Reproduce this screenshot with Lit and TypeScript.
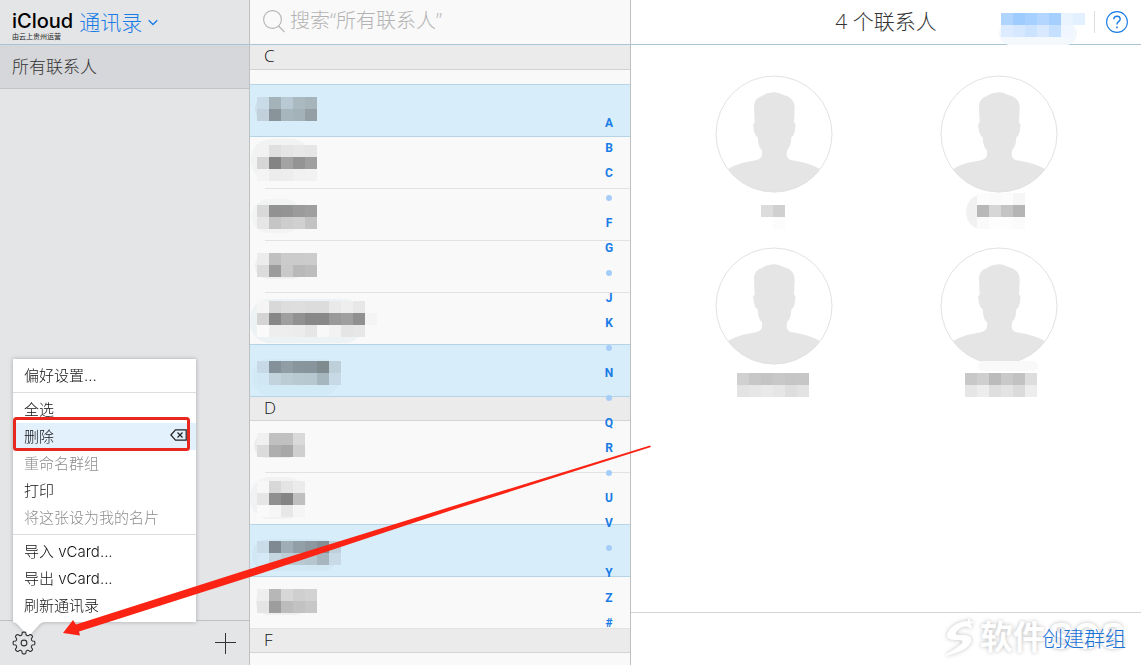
import { LitElement, html, svg, css, nothing } from "lit";
import { customElement, property } from "lit/decorators.js";
import { classMap } from "lit/directives/class-map.js";

const CELL = 12;

interface Mosaic {
  x: number;
  y: number;
  rows: string[];
  /** Soft smudge behind the cells: x, y, width, height, colour. */
  smudge?: [number, number, number, number, string];
}

interface Contact {
  selected?: boolean;
  name: Mosaic;
}

const gearPath = (() => {
  const pts: string[] = [];
  const teeth = 8;
  const at = (r: number, deg: number) => {
    const a = (deg * Math.PI) / 180;
    return `${(12 + r * Math.sin(a)).toFixed(2)} ${(12 - r * Math.cos(a)).toFixed(2)}`;
  };
  for (let i = 0; i < teeth; i++) {
    const c = (i * 360) / teeth;
    pts.push(`${i ? "L" : "M"}${at(8.6, c - 14)}`);
    pts.push(`L${at(10.4, c - 10)} Q${at(10.8, c - 8)} ${at(10.9, c - 5)}`);
    pts.push(`L${at(10.9, c + 5)} Q${at(10.8, c + 8)} ${at(10.4, c + 10)}`);
    pts.push(`L${at(8.6, c + 14)} Q${at(7.6, c + 22.5)} ${at(8.6, c + 31)}`);
  }
  return pts.join(" ") + "Z";
})();

@customElement("pixel-name")
class PixelName extends LitElement {
  @property({ attribute: false }) mosaic!: Mosaic;
  @property({ type: Number }) width = 120;
  @property({ type: Number }) height = 50;

  static styles = css`
    :host {
      display: block;
    }
    svg {
      display: block;
      overflow: visible;
    }
  `;

  render() {
    const { x, y, rows, smudge } = this.mosaic;
    return html`<svg width=${this.width} height=${this.height} shape-rendering="crispEdges" aria-hidden="true">
      ${smudge
        ? svg`<rect x=${smudge[0]} y=${smudge[1]} width=${smudge[2]} height=${smudge[3]} rx=${Math.min(20, smudge[3] / 2)} fill=${smudge[4]} shape-rendering="auto" />`
        : nothing}
      ${rows.map((row, r) =>
        row.split(" ").map((c, i) =>
          c === "-"
            ? nothing
            : svg`<rect x=${x + i * CELL} y=${y + r * CELL} width=${CELL} height=${CELL} fill=${"#" + (c.length === 2 ? c + c + c : c)} />`
        )
      )}
    </svg>`;
  }
}

@customElement("contact-avatar")
class ContactAvatar extends LitElement {
  static styles = css`
    :host {
      display: block;
    }
    svg {
      display: block;
    }
  `;
  render() {
    return html`<svg width="118" height="117" viewBox="45 44 354 351" overflow="visible" aria-hidden="true">
      <path
        fill="#e5e5e5"
        d="M222 96C240 97 245 104 258 106C275 112 285 125 284 145L282 187Q288 188 286 200Q284 226 274 231C273 250 270 262 262 268Q254 294 275 300C310 305 340 314 361 327A174 174 0 0 1 84 327C105 312 135 305 168 300Q190 295 186 270C177 262 174 250 173 231Q163 226 160 200Q158 188 164 187L162 138C163 120 172 112 185 108C197 100 205 97 222 96Z"
      />
      <circle cx="222" cy="221" r="174" fill="none" stroke="#e2e2e2" stroke-width="3" />
    </svg>`;
  }
}

const groupC: Contact[] = [
  { selected: true, name: { x: 7, y: 12, rows: ["c8dbe6 a4b2ba b8c9d3 abb9c1 a6b4bb", "c1d0da 89939a a7b5bd a3b1b8 939ea5"], smudge: [5, 12, 40, 24, "#cfe0ea"] } },
  { name: { x: 7, y: 8, rows: ["f2 df e5 e8 e6", "d6 84 a3 94 9f", "f4 ec ed f1 f2"], smudge: [1, 2, 60, 42, "#f1f3f3"] } },
  { name: { x: 7, y: 16, rows: ["d9 92 94 9b 9f", "e6 c5 cd d0 c3"], smudge: [2, 10, 50, 34, "#f2f3f3"] } },
  { name: { x: 7, y: 12, rows: ["ec c0 cb cb cc", "dc 9b c9 b9 bd"], smudge: [5, 12, 50, 26, "#eeefef"] } },
  { name: { x: 7, y: 8, rows: ["f5 d8 dd de dc dc e9 ee e7", "d4 87 9f 91 88 88 99 9f 90 f4", "fa ee ed ec e6 f8 f2 e5 e7"], smudge: [0, 6, 114, 44, "#edf3f5"] } },
  { selected: true, name: { x: 7, y: 16, rows: ["c6d9e4 84919a 909da5 88959d 87949b 808b90 bdcfd8", "d2e7f4 c2d3dd bbccd5 b8c9d2 b7c8d1 a7b7bf c7d9e4"], smudge: [2, 14, 88, 36, "#d2eaf5"] } },
];

const groupD: Contact[] = [
  { name: { x: 7, y: 12, rows: ["f0 c0 c0 d9", "db ae a8 cf"], smudge: [4, 12, 46, 25, "#ececec"] } },
  { name: { x: 7, y: 8, rows: ["f7 d8 e4 eb", "e6 90 84 bf", "fa f6 e8 f5"], smudge: [0, 4, 56, 42, "#f0f2f3"] } },
  { selected: true, name: { x: 7, y: 16, rows: ["c9dce8 7f8992 9fadb6 939fa7 8c979f 858e93 bed1db", "d5eaf7 c5d6e0 bccdd6 b8c9d2 b5c6cf a7b6be c8dae5"], smudge: [2, 14, 86, 32, "#d1e7f3"] } },
  { name: { x: 7, y: 12, rows: ["ee b7 d7 cf d2", "e5 9d bc c2 c7"], smudge: [6, 12, 52, 26, "#eeefef"] } },
];

const people: Mosaic[] = [
  { x: 48, y: 13, rows: ["dc d0", "- fc"] },
  { x: 39, y: 1, rows: ["fc fa fc f6", "b8 d6 c4 b5", "fa fd fd fb"], smudge: [28, 3, 30, 34, "#f1f1f1"] },
  { x: 24, y: 9, rows: ["d0 c7 c4 c8 c5 c6", "e3 e6 e9 e6 de e3"] },
  { x: 27, y: 9, rows: ["c8 cf bb c9 c2 dd", "e6 ed de e3 db ed"], smudge: [40, -3, 60, 10, "#f9f9f9"] },
];

const account: Mosaic = {
  x: 6,
  y: 13,
  rows: ["afd5ff 9fccff a6d0ff b2d6ff a4cfff eaf4ff e3f0ff", "dcebff d5e8ff cce3ff d8e9ff c5dfff eff6ff"],
  smudge: [4, 22, 78, 23, "#f3f8fc"],
};

const indexKeys = ["A", "B", "C", "•", "F", "G", "•", "J", "K", "•", "N", "•", "Q", "R", "•", "U", "V", "•", "Y", "Z", "#"];

const menu: { label: string; disabled?: boolean; active?: boolean }[][] = [
  [{ label: "偏好设置..." }],
  [
    { label: "全选" },
    { label: "删除", active: true },
    { label: "重命名群组", disabled: true },
    { label: "打印" },
    { label: "将这张设为我的名片", disabled: true },
  ],
  [{ label: "导入 vCard..." }, { label: "导出 vCard..." }, { label: "刷新通讯录" }],
];

@customElement("app-root")
class AppRoot extends LitElement {
  static styles = css`
    :host {
      display: grid;
      grid-template-columns: 250px 381px minmax(0, 1fr);
      grid-template-rows: minmax(0, 1fr);
      position: relative;
      height: 100vh;
      overflow: hidden;
      background: #fff;
      color: #333;
      font-family: "Open Sans", "Noto Sans CJK SC", sans-serif;
      font-weight: 300;
    }
    * {
      box-sizing: border-box;
    }
    button,
    input {
      font: inherit;
      color: inherit;
      border: 0;
      margin: 0;
      padding: 0;
      background: none;
      outline: 0;
      text-align: left;
    }
    a {
      color: inherit;
      text-decoration: none;
    }
    ul {
      list-style: none;
      margin: 0;
      padding: 0;
    }
    .column {
      display: flex;
      flex-direction: column;
      min-width: 0;
    }
    .head {
      flex: none;
      height: 45px;
      border-bottom: 1px solid #a9c4d6;
      display: flex;
      align-items: center;
    }

    .sidebar {
      background: #e4e5e7;
      border-right: 1px solid #bfc0c2;
    }
    .brand {
      padding: 0 12px;
      gap: 6px;
    }
    .logo {
      display: flex;
      flex-direction: column;
      color: #000;
      padding-top: 5px;
    }
    .word {
      font: 500 20px/22px Inter, sans-serif;
    }
    .operator {
      font: 400 7px/8px "Noto Sans CJK SC", sans-serif;
      color: #222;
    }
    .switcher {
      display: flex;
      align-items: center;
      gap: 6px;
      font-size: 21px;
      line-height: 30px;
      color: #1a7ce6;
    }
    .group {
      height: 44px;
      padding: 0 12px;
      background: #d6d7da;
      border-bottom: 1px solid #c3c4c6;
      font-size: 17px;
      line-height: 43px;
    }
    .tools {
      margin-top: auto;
      height: 45px;
      padding: 0 13px 0 12px;
      border-top: 1px solid #bfc0c2;
      display: flex;
      justify-content: space-between;
      align-items: center;
    }
    .tools button,
    .tools svg {
      display: block;
    }
    .gear {
      position: relative;
      z-index: 3;
    }

    .list {
      position: relative;
      background: #f9f9f9;
      border-right: 1px solid #bfbfbf;
    }
    .search {
      padding: 0 12px;
      gap: 4px;
    }
    .search input {
      flex: 1;
      min-width: 0;
      font-size: 20px;
      height: 40px;
      padding-bottom: 4px;
    }
    .search input::placeholder {
      color: #b3b3b3;
      opacity: 1;
    }
    .search svg {
      display: block;
      flex: none;
    }
    .scroll {
      flex: 1;
      min-height: 0;
      overflow: hidden;
    }
    .letter {
      margin: 0;
      height: 24px;
      padding-left: 14px;
      background: #ebebeb;
      border-bottom: 1px solid #d3d3d3;
      color: #111;
      font-size: 17px;
      font-weight: 300;
      line-height: 22px;
    }
    .first {
      height: 25px;
      margin-bottom: 15px;
    }
    .contact {
      height: 52px;
      background: linear-gradient(#e2e2e2, #e2e2e2) right bottom / calc(100% - 15px) 1px no-repeat;
    }
    .contact:last-child {
      background-size: 100% 1px;
    }
    .selected {
      position: relative;
      background: #d8edfa;
      border-bottom: 1px solid #b5d5e7;
      box-shadow: 0 -1px 0 #b5d5e7;
    }
    .index {
      position: absolute;
      top: 111px;
      right: 11px;
      width: 20px;
      font: 700 12px/25px Roboto, sans-serif;
      color: #1a7ce6;
      text-align: center;
    }
    .index a {
      display: flex;
      height: 25px;
      align-items: center;
      justify-content: center;
    }
    .dot {
      width: 6px;
      height: 6px;
      margin-bottom: 2px;
      border-radius: 3px;
      background: #a5cdf8;
    }

    .summary {
      display: grid;
      grid-template-columns: 1fr auto 1fr;
    }
    .title {
      grid-column: 2;
      margin: 0;
      font-size: 21px;
      font-weight: 300;
      line-height: 42px;
      padding-bottom: 2px;
    }
    .account {
      display: flex;
      align-items: center;
      justify-content: flex-end;
      padding-right: 13px;
    }
    .help {
      border-left: 1px solid #ddd;
      padding-left: 11px;
      color: #1a7ce6;
    }
    .help svg {
      display: block;
    }
    .people {
      flex: 1;
      display: grid;
      grid-template-columns: 1fr 1fr;
      align-content: start;
      padding: 30px 30px 0;
    }
    .person {
      display: flex;
      flex-direction: column;
      align-items: center;
    }
    .actions {
      position: relative;
      height: 53px;
      border-top: 1px solid #d5d5d5;
      display: flex;
      justify-content: flex-end;
      align-items: center;
      padding-right: 15px;
    }
    .create {
      position: relative;
      font-size: 21px;
      line-height: 30px;
      padding-bottom: 2px;
      color: #1b73d6;
    }
    .watermark {
      position: absolute;
      right: 16px;
      top: 2px;
      display: flex;
      align-items: center;
      gap: 3px;
      font: 700 33px/44px "Liberation Sans", "Noto Sans CJK SC", sans-serif;
      color: #fff;
      text-shadow: 0 0 4px #bbb;
    }
    .latin {
      font-size: 36px;
      margin-left: 3px;
    }
    .watermark svg {
      filter: drop-shadow(0 0 2px #c0c0c0);
    }

    .menu {
      position: absolute;
      z-index: 2;
      left: 13px;
      bottom: 43px;
      width: 183px;
      padding: 3px 0;
      background: #fff;
      filter: drop-shadow(0 0 2px #a8a8a8);
      color: #111;
      font-family: Inter, "Noto Sans CJK SC", sans-serif;
      font-size: 15px;
    }
    .menu li + li {
      border-top: 1px solid #ddd;
      margin-top: 3px;
      padding-top: 3px;
    }
    .item {
      display: flex;
      align-items: center;
      justify-content: space-between;
      width: 100%;
      height: 27px;
      padding: 0 9px 0 11px;
      line-height: 27px;
    }
    .item svg {
      margin-bottom: 4px;
    }
    .active {
      background: #e3f1fd;
    }
    .item:disabled {
      color: #8c8c8c;
    }
    .pointer {
      position: absolute;
      left: 0;
      top: 100%;
      display: block;
    }
    .markup {
      position: absolute;
      z-index: 4;
      left: 0;
      bottom: 0;
      pointer-events: none;
    }
  `;

  private contact(c: Contact) {
    return html`<li class=${classMap({ contact: true, selected: !!c.selected })}>
      <pixel-name .mosaic=${c.name}></pixel-name>
    </li>`;
  }

  render() {
    return html`
      <aside class="column sidebar">
        <header class="head brand">
          <div class="logo">
            <span class="word">iCloud</span>
            <span class="operator">由云上贵州运营</span>
          </div>
          <button class="switcher">
            通讯录
            <svg width="10" height="7" viewBox="0 0 10 7" fill="none" stroke="currentColor" stroke-width="1.3" aria-hidden="true">
              <path d="M.7 1.2 5 5.5 9.3 1.2" />
            </svg>
          </button>
        </header>
        <button class="group">所有联系人</button>
        <div class="tools">
          <button class="gear" aria-label="设置">
            <svg width="24" height="24" viewBox="0 0 24 24" fill="none" stroke="#333" stroke-width="1.1">
              <path d=${gearPath} stroke-linejoin="round" />
              <circle cx="12" cy="12" r="2.9" />
            </svg>
          </button>
          <button aria-label="添加">
            <svg width="22" height="22" viewBox="0 0 22 22" stroke="#333" stroke-width="1" shape-rendering="crispEdges">
              <path d="M.5 10.5h21M11.5 .5v21" />
            </svg>
          </button>
        </div>
      </aside>

      <section class="column list">
        <label class="head search">
          <svg width="24" height="24" viewBox="0 0 24 24" fill="none" stroke="#b3b3b3" stroke-width="1.1" aria-hidden="true">
            <circle cx="10.500" cy="9.500" r="8.900" />
            <path d="m16.500 16 6 6" />
          </svg>
          <input type="text" aria-label="搜索" placeholder="搜索“所有联系人”" />
        </label>
        <div class="scroll">
          <h2 class="letter first">C</h2>
          <ul>${groupC.map((c) => this.contact(c))}</ul>
          <h2 class="letter">D</h2>
          <ul>${groupD.map((c) => this.contact(c))}</ul>
          <h2 class="letter">F</h2>
        </div>
        <nav class="index">
          ${indexKeys.map((k) => html`<a href="#">${k === "•" ? html`<span class="dot"></span>` : k}</a>`)}
        </nav>
      </section>

      <main class="column">
        <header class="head summary">
          <h1 class="title">4 个联系人</h1>
          <div class="account">
            <pixel-name .mosaic=${account} width="99" height="44"></pixel-name>
            <button class="help" aria-label="帮助">
              <svg width="22" height="22" viewBox="0 0 22 22" fill="none" stroke="currentColor" stroke-width="1.1">
                <circle cx="11" cy="11" r="10.4" />
                <path d="M7.8 8.2Q8 5.2 11 5.2T14.2 8Q14.2 9.6 12.6 10.6T11 13.6" stroke-width="1.4" />
                <path d="M11 15.4v1.8" stroke-width="1.6" />
              </svg>
            </button>
          </div>
        </header>
        <div class="people">
          ${people.map(
            (p) => html`<div class="person">
              <contact-avatar></contact-avatar>
              <pixel-name .mosaic=${p} width="121" height="55"></pixel-name>
            </div>`
          )}
        </div>
        <footer class="actions">
          <div class="watermark">
            <svg width="34" height="40" viewBox="0 0 34 40" fill="#fff" aria-hidden="true">
              <path d="M23 3C14 4 5 10 4 17C4 22 10 22 15 22C20 22 21 24 17 27C12 31 7 33 2 38C12 36 25 32 28 24C30 17 23 17 17 17C12 17 12 15 15 12C19 8 24 7 28 11C30 9 28 4 23 3Z" />
              <path d="M26 1v7M23 4.500h7" stroke="#fff" stroke-width="2" />
            </svg>
            <span>软件<span class="latin">SOS</span></span>
          </div>
          <button class="create">创建群组</button>
        </footer>
      </main>

      <ul class="menu">
        ${menu.map(
          (section) => html`<li>
            ${section.map(
              (m) => html`<button class=${classMap({ item: true, active: !!m.active })} ?disabled=${!!m.disabled}>
                ${m.label}
                ${m.active
                  ? html`<svg width="17" height="12" viewBox="0 0 17 12" fill="none" stroke="#222" stroke-width="1.2" aria-hidden="true">
                      <path d="M.9 6 5.500 .8H16.200V11.200H5.500ZM7.500 3.500l5 5M12.500 3.500l-5 5" />
                    </svg>`
                  : nothing}
              </button>`
            )}
          </li>`
        )}
        <svg class="pointer" width="32" height="14" viewBox="0 0 32 14" fill="#fff" aria-hidden="true">
          <path d="M0 0Q4 1 6 4L13 12Q15.500 14 18 12L25 4Q27 1 31 0Z" />
        </svg>
      </ul>

      <svg class="markup" width="660" height="265" viewBox="0 400 660 265" aria-hidden="true">
        <rect x="14.500" y="418.500" width="174" height="31" rx="2" fill="none" stroke="#e8281e" stroke-width="3" />
        <path fill="#fb2414" d="M63 633 73 620 76 624.500 250 569 450 507 650 445.500 651 447 450 510.700 250 577 79 631.500 80 635.500Z" />
      </svg>
    `;
  }
}
